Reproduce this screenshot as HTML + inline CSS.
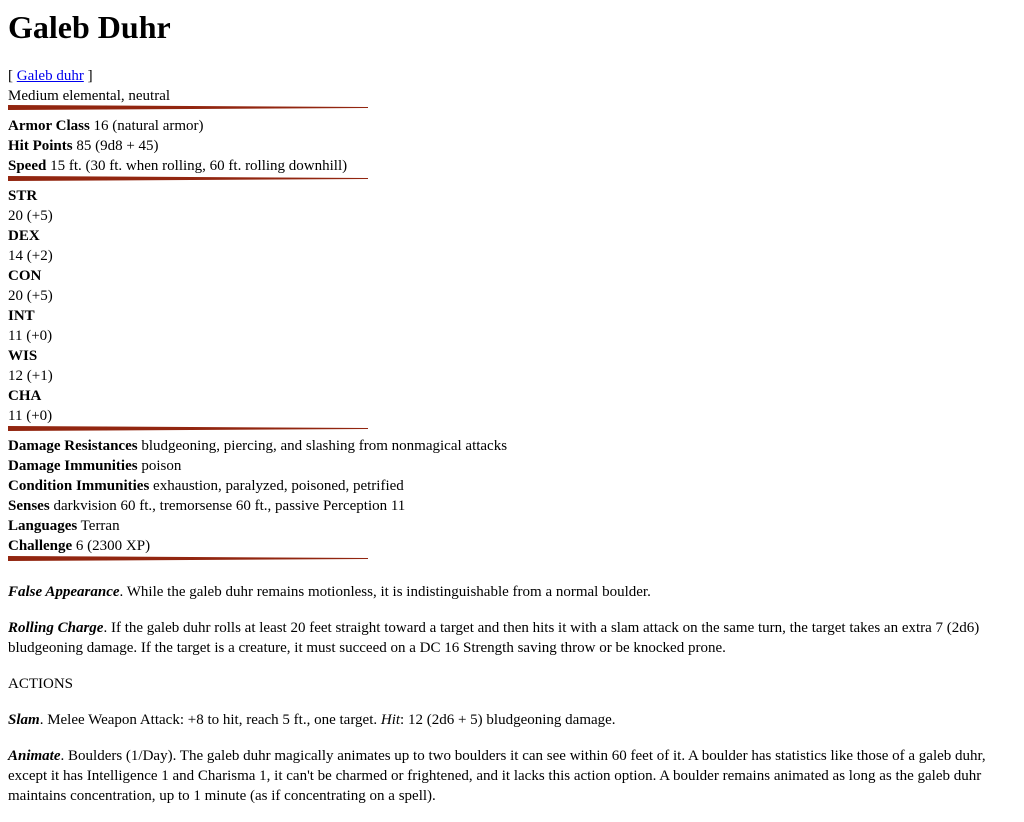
<!DOCTYPE html>
<html><head><style>
body{margin:0;font-family:"Liberation Serif",serif;font-size:15px;color:#000;background:#fff}
.a{position:absolute;left:8px;line-height:20px;white-space:nowrap;margin-top:1px}
h1{position:absolute;left:8px;top:9px;margin:0;font-size:32px;line-height:36px;font-weight:bold}
svg{position:absolute;left:8px}
a{color:#00e}
</style></head><body>
<h1>Galeb Duhr</h1>
<div class="a" style="top:65px">[ <a href="#">Galeb duhr</a> ]</div>
<div class="a" style="top:85px">Medium elemental, neutral</div>
<svg style="top:105px" width="360" height="5"><polygon points="0,0 360,2 360,3 0,5" fill="#922610"/></svg>
<div class="a" style="top:115px"><b>Armor Class</b> 16 (natural armor)</div>
<div class="a" style="top:135px"><b>Hit Points</b> 85 (9d8 + 45)</div>
<div class="a" style="top:155px"><b>Speed</b> 15 ft. (30 ft. when rolling, 60 ft. rolling downhill)</div>
<svg style="top:176px" width="360" height="5"><polygon points="0,0 360,2 360,3 0,5" fill="#922610"/></svg>
<div class="a" style="top:185px"><b>STR</b></div>
<div class="a" style="top:205px">20 (+5)</div>
<div class="a" style="top:225px"><b>DEX</b></div>
<div class="a" style="top:245px">14 (+2)</div>
<div class="a" style="top:265px"><b>CON</b></div>
<div class="a" style="top:285px">20 (+5)</div>
<div class="a" style="top:305px"><b>INT</b></div>
<div class="a" style="top:325px">11 (+0)</div>
<div class="a" style="top:345px"><b>WIS</b></div>
<div class="a" style="top:365px">12 (+1)</div>
<div class="a" style="top:385px"><b>CHA</b></div>
<div class="a" style="top:405px">11 (+0)</div>
<svg style="top:426px" width="360" height="5"><polygon points="0,0 360,2 360,3 0,5" fill="#922610"/></svg>
<div class="a" style="top:435px"><b>Damage Resistances</b> bludgeoning, piercing, and slashing from nonmagical attacks</div>
<div class="a" style="top:455px"><b>Damage Immunities</b> poison</div>
<div class="a" style="top:475px"><b>Condition Immunities</b> exhaustion, paralyzed, poisoned, petrified</div>
<div class="a" style="top:495px"><b>Senses</b> darkvision 60 ft., tremorsense 60 ft., passive Perception 11</div>
<div class="a" style="top:515px"><b>Languages</b> Terran</div>
<div class="a" style="top:535px"><b>Challenge</b> 6 (2300 XP)</div>
<svg style="top:556px" width="360" height="5"><polygon points="0,0 360,2 360,3 0,5" fill="#922610"/></svg>
<div class="a" style="top:581px"><b><i>False Appearance</i></b>. While the galeb duhr remains motionless, it is indistinguishable from a normal boulder.</div>
<div class="a" style="top:617px"><b><i>Rolling Charge</i></b>. If the galeb duhr rolls at least 20 feet straight toward a target and then hits it with a slam attack on the same turn, the target takes an extra 7 (2d6)</div>
<div class="a" style="top:637px">bludgeoning damage. If the target is a creature, it must succeed on a DC 16 Strength saving throw or be knocked prone.</div>
<div class="a" style="top:673px">ACTIONS</div>
<div class="a" style="top:709px"><b><i>Slam</i></b>. Melee Weapon Attack: +8 to hit, reach 5 ft., one target. <i>Hit</i>: 12 (2d6 + 5) bludgeoning damage.</div>
<div class="a" style="top:745px"><b><i>Animate</i></b>. Boulders (1/Day). The galeb duhr magically animates up to two boulders it can see within 60 feet of it. A boulder has statistics like those of a galeb duhr,</div>
<div class="a" style="top:765px">except it has Intelligence 1 and Charisma 1, it can't be charmed or frightened, and it lacks this action option. A boulder remains animated as long as the galeb duhr</div>
<div class="a" style="top:785px">maintains concentration, up to 1 minute (as if concentrating on a spell).</div>
</body></html>
